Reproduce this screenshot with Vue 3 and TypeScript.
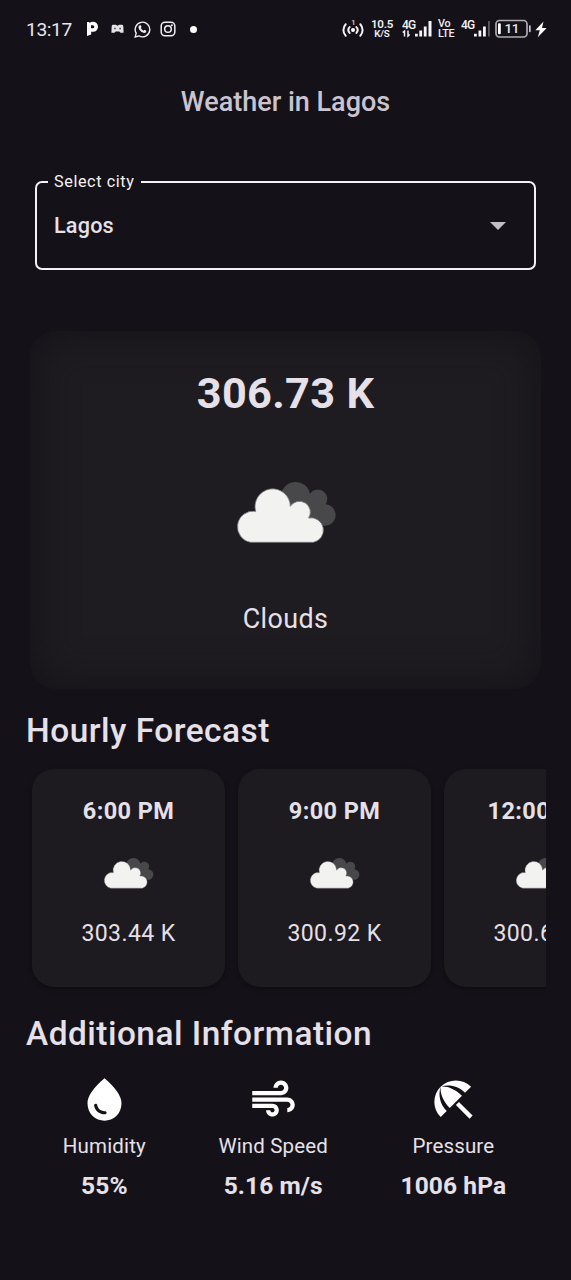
<script setup lang="ts">
interface Hour {
  time: string
  temp: string
}

interface Info {
  label: string
  value: string
  path: string
}

const hours: Hour[] = [
  { time: '6:00 PM', temp: '303.44 K' },
  { time: '9:00 PM', temp: '300.92 K' },
  { time: '12:00 AM', temp: '300.61 K' },
]

const infos: Info[] = [
  {
    label: 'Humidity',
    value: '55%',
    path: 'M12,2c-5.33,4.55-8,8.48-8,11.8c0,4.98,3.8,8.2,8,8.2s8-3.22,8-8.2C20,10.48,17.33,6.55,12,2z M7.83,14c0.37,0,0.67,0.26,0.74,0.62c0.41,2.22,2.28,2.98,3.64,2.87c0.43-0.02,0.79,0.32,0.79,0.75c0,0.4-0.32,0.73-0.72,0.75c-2.13,0.13-4.62-1.09-5.19-4.12C7.01,14.42,7.37,14,7.83,14z',
  },
  {
    label: 'Wind Speed',
    value: '5.16 m/s',
    path: 'M14.5,17c0,1.65-1.35,3-3,3s-3-1.35-3-3h2c0,0.55,0.45,1,1,1s1-0.45,1-1s-0.45-1-1-1H2v-2h9.5C13.15,14,14.5,15.35,14.5,17z M19,6.5C19,4.57,17.43,3,15.5,3S12,4.57,12,6.5h2C14,5.67,14.67,5,15.5,5S17,5.67,17,6.5S16.33,8,15.5,8H2v2h13.5C17.43,10,19,8.43,19,6.5z M18.5,11H2v2h16.5c0.83,0,1.5,0.67,1.5,1.5S19.33,16,18.5,16v2c1.93,0,3.5-1.57,3.5-3.5S20.43,11,18.5,11z',
  },
  {
    label: 'Pressure',
    value: '1006 hPa',
    path: 'M13.127 14.56l1.43-1.43 6.44 6.443L19.57 21zm4.293-5.73l2.86-2.86c-3.95-3.95-10.35-3.96-14.3-.02 3.93-1.3 8.31-.25 11.44 2.88zM5.95 5.98c-3.94 3.95-3.93 10.35.02 14.3l2.86-2.86C5.7 14.29 4.65 9.91 5.95 5.98zm.02-.02l-.01.01c-.38 3.01 1.17 6.88 4.3 10.02l5.73-5.73c-3.13-3.13-7.01-4.68-10.02-4.3z',
  },
]
</script>

<template>
  <div class="screen">
    <svg width="0" height="0" class="defs">
      <symbol id="clouds" viewBox="66 48 320 210">
        <path
          d="M210 107a44 44 0 0 1 87-6a28 28 0 0 1 47 32a32 32 0 1 1-22 57L230 150z"
          fill="#48484a"
        />
        <path
          d="M119 247a47 47 0 0 1 15-93a53 53 0 1 1 104-15a31 31 0 0 1 55 35a37 37 0 0 1 14 73z"
          fill="#f2f2f0"
          stroke="#77777a"
          stroke-width="2.5"
        />
      </symbol>
    </svg>

    <header class="status">
      <div class="left">
        <span class="clock">13:17</span>
        <svg class="i-p" width="13" height="16" viewBox="0 0 13 16">
          <path d="M1 1h2.500v1.200Q4.800.800 6.800.800a5 5 0 0 1 .4 10H5.200v2.700L1 15z M5 4.300v3h1.800a1.500 1.500 0 0 0 0-3z" fill="#fff" fill-rule="evenodd" />
        </svg>
        <svg class="i-game" width="13" height="10" viewBox="0 0 13 10">
          <path d="M1.800.8h3L6.500 1.800 8.200.8h3q1 0 1.100 1.500l.3 6.400H9.500L8.300 7.600H4.700L3.500 8.700H.4l.3-6.400Q.8.800 1.800.8z" fill="#e4e2e6" />
          <path d="M3.200 4.500h1.400M8.400 4.500h1.400" stroke="#3a383e" stroke-width="1.600" />
        </svg>
        <svg class="i-wa" width="17" height="17" viewBox="0 0 17 17">
          <path d="M1.200 15.900l1-3.700a7.300 7.300 0 1 1 2.800 2.700z" fill="none" stroke="#f0eef2" stroke-width="1.400" />
          <path d="M5.300 4.500q1-.900 1.500 0l.700 1.500-.700 1.100q.800 1.700 2.700 2.600l1-.9 1.800.9q.4 1.700-1.700 2.200C7.600 12 4.500 8.500 4.500 6.300q0-1.100.8-1.800z" fill="#f0eef2" />
        </svg>
        <svg class="i-ig" width="16" height="16" viewBox="0 0 16 16">
          <rect x="1.200" y="1.200" width="13.600" height="13.600" rx="3.800" fill="none" stroke="#f0eef2" stroke-width="1.500" />
          <circle cx="8" cy="8" r="3.300" fill="none" stroke="#f0eef2" stroke-width="1.500" />
          <circle cx="11.900" cy="4.200" r="1" fill="#f0eef2" />
        </svg>
        <i class="dot"></i>
      </div>
      <div class="right">
        <svg class="i-hot" width="22" height="20" viewBox="0 0 22 20">
          <g fill="none" stroke="#f4f2f6" stroke-width="2" stroke-linecap="round">
            <path d="M7.600 8.100a4.300 4.300 0 0 0 0 5.800M14.400 8.100a4.300 4.300 0 0 1 0 5.800" />
            <path d="M3.700 5.200a8.500 8.500 0 0 0 0 11.600M18.300 5.200a8.500 8.500 0 0 1 0 11.600" />
          </g>
          <circle cx="11" cy="11" r="2" fill="#fff" />
          <text x="9.200" y="5.600" class="tiny">1</text>
        </svg>
        <span class="stack speed"><b>10.5</b><b class="sub">K/S</b></span>
        <svg class="i-sig1" width="31" height="20" viewBox="0 0 31 20">
          <text x="0" y="9.500" class="gen">4G</text>
          <path d="M2.500 17.500v-5.500L.700 13.500M6 11.500v5.500L7.700 15.500" fill="none" stroke="#f4f2f6" stroke-width="1.500" />
          <path d="M13 14.800h2.800v2.700H13zM17.300 11.500h2.800v6h-2.800zM21.800 7.500h2.800v10h-2.800zM26.500 2h3v15.500h-3z" fill="#f6f4f8" />
        </svg>
        <span class="stack volte"><b>Vo</b><b>LTE</b></span>
        <svg class="i-sig2" width="30" height="20" viewBox="0 0 30 20">
          <text x="0" y="9.500" class="gen">4G</text>
          <path d="M13 14.800h2.800v2.700H13zM17.500 11.500h2.800v6h-2.800zM22 7.500h2.800v10H22z" fill="#f6f4f8" />
          <path d="M27 2h1.800v15.500H27z" fill="#5c5a60" />
        </svg>
        <svg class="i-bat" width="37" height="20" viewBox="0 0 37 20">
          <rect x="1" y="1.500" width="31" height="16.500" rx="3.500" fill="none" stroke="#aeacb2" stroke-width="1.700" />
          <rect x="3" y="4.200" width="2.800" height="11" rx="1" fill="#fff" />
          <rect x="34" y="6.200" width="1.700" height="7" rx=".8" fill="#c8c6cc" />
          <text x="9.500" y="14.200" class="level">11</text>
        </svg>
        <svg class="i-bolt" width="12" height="17" viewBox="0 0 12 17">
          <path d="M8.500.500L.300 9.200h4.500L2.800 16.300 11.700 7H7z" fill="#fff" />
        </svg>
      </div>
    </header>

    <h1 class="title">Weather in Lagos</h1>

    <div class="select">
      <label class="select-label">Select city</label>
      <span class="select-value">Lagos</span>
      <svg width="16" height="8" viewBox="0 0 16 8"><path d="M0 0h16L8 8z" fill="#c2bdc6" /></svg>
    </div>

    <section class="current">
      <div class="temp">306.73 K</div>
      <svg class="cloud-lg"><use href="#clouds" /></svg>
      <div class="cond">Clouds</div>
    </section>

    <h2 class="heading">Hourly Forecast</h2>
    <div class="hours">
      <article v-for="h in hours" :key="h.time" class="hour">
        <b class="hour-time">{{ h.time }}</b>
        <svg class="cloud-sm"><use href="#clouds" /></svg>
        <span class="hour-temp">{{ h.temp }}</span>
      </article>
    </div>

    <h2 class="heading second">Additional Information</h2>
    <div class="infos">
      <div v-for="i in infos" :key="i.label" class="info">
        <svg width="51" height="51" viewBox="0 0 24 24"><path :d="i.path" fill="#fff" /></svg>
        <span class="info-label">{{ i.label }}</span>
        <b class="info-value">{{ i.value }}</b>
      </div>
    </div>
  </div>
</template>

<style>
body {
  background: #141218;
}
</style>

<style scoped>
.screen {
  width: 571px;
  height: 1280px;
  overflow: hidden;
  background: #141218;
  color: #e6e0e9;
  font-family: Roboto, "Noto Sans", sans-serif;
  white-space: nowrap;
  display: flex;
  flex-direction: column;
}
.defs {
  display: block;
  flex: none;
}
.status {
  height: 58px;
  flex: none;
  display: flex;
  justify-content: space-between;
  padding: 0 24px 0 26px;
  box-sizing: border-box;
}
.left,
.right {
  display: flex;
  align-items: center;
}
.clock {
  width: 60px;
  font-size: 19.2px;
  letter-spacing: -0.4px;
  color: #e8e6ea;
}
.i-game { margin-left: 12px; }
.i-wa { margin-left: 10px; }
.i-ig { margin-left: 9px; }
.dot {
  width: 7px;
  height: 7px;
  border-radius: 50%;
  background: #fff;
  margin-left: 14px;
}
.tiny { font: 500 7.5px Roboto; fill: #ddd; }
.gen { font: 500 12px Roboto; fill: #f4f2f6; letter-spacing: -0.9px; }
.level { font: 500 13.5px Roboto; fill: #e8e6ea; letter-spacing: -0.5px; }
.stack {
  display: flex;
  flex-direction: column;
  align-items: center;
  color: #f0eef2;
}
.stack b {
  font-weight: 500;
  font-size: 10.8px;
  line-height: 10px;
}
.speed { width: 22px; margin-left: 7px; margin-top: -1px; }
.speed b { font-size: 11.6px; font-weight: 600; letter-spacing: -0.25px; }
.speed .sub { font-size: 9.8px; letter-spacing: -0.2px; }
.i-sig1 { margin-left: 9px; }
.volte { width: 17px; margin-left: 5px; align-items: flex-start; }
.volte b { letter-spacing: -0.3px; }
.i-sig2 { margin-left: 6px; }
.i-bat { margin-left: 4px; }
.i-bolt { margin-left: 3px; }
.title {
  margin: 24px 0 0;
  flex: none;
  line-height: 40px;
  text-align: center;
  font-size: 27px;
  font-weight: 500;
  color: #cac4d0;
}
.select {
  position: relative;
  flex: none;
  box-sizing: border-box;
  height: 89px;
  margin: 59px 35px 0;
  padding: 0 28px 0 17px;
  border: 2px solid #f4f2f6;
  border-radius: 7px;
  display: flex;
  align-items: center;
  justify-content: space-between;
}
.select-label {
  position: absolute;
  left: 11px;
  top: -11px;
  padding: 0 6.5px 0 6px;
  background: #141218;
  color: #f4f2f6;
  font-size: 16.2px;
  line-height: 20px;
  letter-spacing: 0.6px;
}
.select-value {
  font-size: 21.6px;
  font-weight: 500;
  letter-spacing: 0.2px;
}
.current {
  flex: none;
  height: 358px;
  margin: 61px 30px 0;
  border-radius: 26px;
  background: #1e1c20;
  box-shadow: inset 0 0 44px #141218;
  display: flex;
  flex-direction: column;
  align-items: center;
}
.temp {
  margin-top: 38px;
  line-height: 50px;
  font-size: 43.3px;
  font-weight: 700;
  letter-spacing: 0.3px;
}
.cloud-lg {
  width: 106.67px;
  height: 70px;
  margin-top: 57px;
  margin-left: 1px;
}
.cond {
  margin-top: 53px;
  line-height: 40px;
  font-size: 26.9px;
  letter-spacing: 0.4px;
}
.heading {
  flex: none;
  margin: 21px 26px 0;
  line-height: 42px;
  font-size: 33.4px;
  font-weight: 500;
  letter-spacing: 0.5px;
}
.hours {
  flex: none;
  display: flex;
  gap: 13px;
  margin: 8px 25px 0 26px;
  padding: 9px 0 9px 6px;
  overflow: hidden;
}
.hour {
  flex: none;
  width: 193px;
  height: 218px;
  border-radius: 22px;
  background: #1d1b20;
  box-shadow: 0 2px 4px rgba(0, 0, 0, 0.35);
  display: flex;
  flex-direction: column;
  align-items: center;
}
.hour-time {
  margin-top: 27px;
  line-height: 30px;
  font-size: 23.5px;
  letter-spacing: 0.4px;
}
.cloud-sm {
  width: 53.33px;
  height: 35px;
  margin-top: 29px;
}
.hour-temp {
  margin-top: 29px;
  line-height: 30px;
  font-size: 23px;
  letter-spacing: 0.4px;
}
.second {
  margin-top: 17px;
}
.infos {
  flex: none;
  display: flex;
  justify-content: center;
  gap: 72.5px;
  margin: 19px 27px 0 25px;
}
.info {
  display: flex;
  flex-direction: column;
  align-items: center;
}
.info svg {
  display: block;
}
.info-label {
  margin-top: 6px;
  line-height: 30px;
  font-size: 20.5px;
  letter-spacing: 0.15px;
}
.info-value {
  margin-top: 10px;
  line-height: 30px;
  font-size: 24.5px;
  letter-spacing: 0.1px;
}
</style>
